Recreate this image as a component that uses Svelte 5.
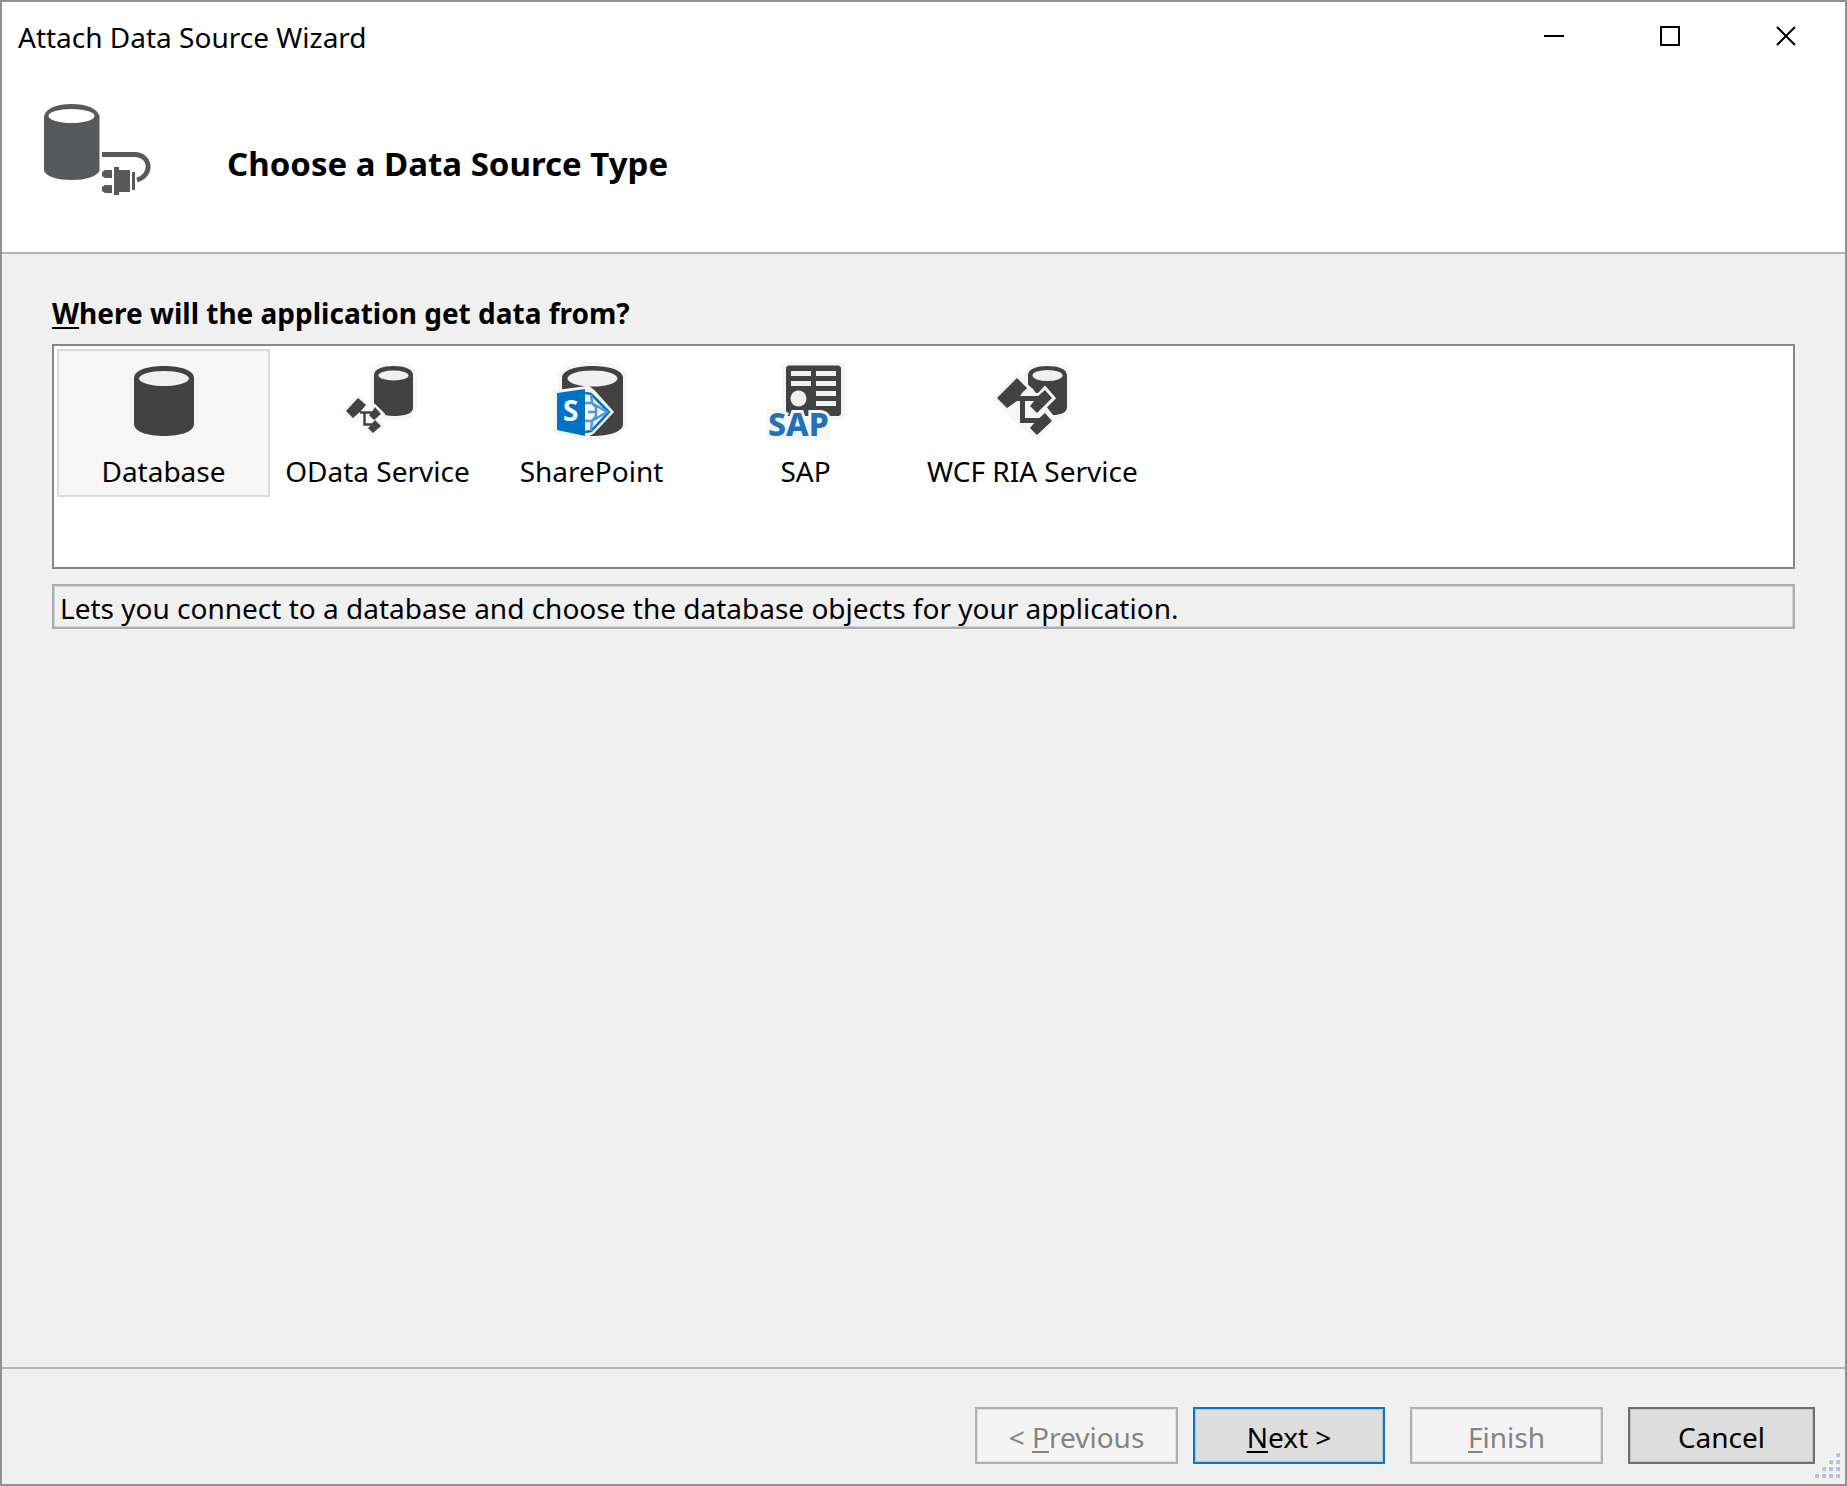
<script lang="ts">
	type SourceId = 'database' | 'odata' | 'sharepoint' | 'sap' | 'wcf';

	const sources: { id: SourceId; label: string; description: string }[] = [
		{
			id: 'database',
			label: 'Database',
			description: 'Lets you connect to a database and choose the database objects for your application.'
		},
		{ id: 'odata', label: 'OData Service', description: 'Lets you connect to an OData service.' },
		{ id: 'sharepoint', label: 'SharePoint', description: 'Lets you connect to a SharePoint site.' },
		{ id: 'sap', label: 'SAP', description: 'Lets you connect to SAP.' },
		{ id: 'wcf', label: 'WCF RIA Service', description: 'Lets you connect to a WCF RIA service.' }
	];

	let selected = $state<SourceId>('database');
	const description = $derived(sources.find((s) => s.id === selected)?.description ?? '');

	// resize grip dots, one more per row towards the corner
	const grip = [0, 1, 2, 3].flatMap((row) =>
		Array.from({ length: row + 1 }, (_, i) => ({ x: 23 - i * 7, y: 1 + row * 7 }))
	);
</script>

<div class="window">
	<div class="titlebar">
		<span class="title">Attach Data Source Wizard</span>
		<div class="controls">
			<button type="button" aria-label="Minimize">
				<svg width="20" height="20" viewBox="0 0 20 20"><path d="M0 10h20" stroke="#000" stroke-width="2" /></svg>
			</button>
			<button type="button" aria-label="Maximize">
				<svg width="20" height="20" viewBox="0 0 20 20"><path d="M1 1h18v18H1z" fill="none" stroke="#000" stroke-width="2" /></svg>
			</button>
			<button type="button" aria-label="Close">
				<svg width="20" height="20" viewBox="0 0 20 20"><path d="M1 1l18 18M19 1L1 19" stroke="#000" stroke-width="2" /></svg>
			</button>
		</div>
	</div>

	<header>
		<svg class="logo" width="108" height="92" viewBox="0 0 108 92" fill="#58595b">
			<path d="M0 12C2 4 13 0 27.500 0S53 4 55.500 12V67C52 73 41 76 27.500 76S3 73 0 67Z" />
			<ellipse cx="27.500" cy="12" rx="23" ry="7" fill="#fff" />
			<path d="M58 50.500H92C107 52 109 71 93 76" fill="none" stroke="#58595b" stroke-width="4.800" />
			<path d="M58 68l3-2h7v8h-7l-3-2zM58 83l3-2h7v8h-7l-3-2zM70 63h5v3h11v22H75v3h-5zM88 68h3v18h-3z" />
		</svg>
		<h1>Choose a Data Source Type</h1>
	</header>

	<main>
		<h2 id="source-label"><u>W</u>here will the application get data from?</h2>
		<div class="list" role="listbox" aria-labelledby="source-label">
			{#each sources as source (source.id)}
				<button
					type="button"
					class="source"
					class:selected={source.id === selected}
					role="option"
					aria-selected={source.id === selected}
					onclick={() => (selected = source.id)}
				>
					<svg width="80" height="80" viewBox="0 0 80 80" fill="#424242">
						{#if source.id === 'database'}
							<path d="M10 17C10 9 24 5 40 5S70 9 70 17V63C70 71 56 75 40 75S10 71 10 63Z" />
							<ellipse cx="40" cy="17.500" rx="25" ry="7.500" fill="#f0eff1" />
						{:else if source.id === 'odata'}
							<path class="halo" d="M36 14C36 8 45 5 55.500 5S75 8 75 14V47C75 53 66 55 55.500 55S36 50 36 47Z" />
							<path d="M36 14C36 8 45 5 55.500 5S75 8 75 14V47C75 53 66 55 55.500 55S36 50 36 47Z" />
							<ellipse cx="55.500" cy="14.500" rx="15" ry="5" fill="#f0eff1" />
							<g class="cut">
								<path d="M8 50L20 37L28 44L15 57ZM37 47L43 53L36 59L31 54ZM37 59L43 65L35 72L30 67Z" />
							</g>
							<path d="M8 50L20 37L28 44L22 51L15 57ZM37 46L43 53L36 59L31 54L34 51ZM37 59L43 65L35 72L30 67L33 64Z" />
							<path d="M22 51.500H36M26.500 51V63.500H36" fill="none" stroke="#424242" stroke-width="2.500" />
						{:else if source.id === 'sharepoint'}
							<path class="halo" d="M10 17C10 9 24 5 40.500 5S71 9 71 17V63C71 71 57 75 40 75L5 69V32L10 31Z" />
							<path d="M10 17C10 9 24 5 40.500 5S71 9 71 17V63C71 71 57 75 40 75H34L10 45Z" />
							<ellipse cx="40.500" cy="17.500" rx="25" ry="8" fill="#f0eff1" />
							<path class="cut" d="M5 32L36 28L41 32L58 51L40 70L33 74L5 69Z" />
							<path d="M33 32L39 33L57 51L39 70L33 71" fill="#f6f6f6" stroke="#0072c6" stroke-width="2.500" />
							<path d="M33 42H40L44 46V55L40 60H33M39 33L40 42L55 51L40 60L39 70M36 51H44" fill="none" stroke="#4d9ad6" stroke-width="2.500" />
							<path d="M5 32L33 28V75L5 69Z" fill="#0072c6" />
							<text x="11" y="60" font-size="28" font-weight="700" fill="#fff">S</text>
						{:else if source.id === 'sap'}
							<path class="halo" d="M22 5H73L75 7V53L73 55H60V75H5V52H20V7Z" />
							<path d="M22 4.500H73L75 6.500V53L73 55H20V6.500Z" />
							<path d="M25 10H45V15H25ZM50 10H70V15H50ZM25 20H45V25H25ZM50 20H70V25H50ZM50 30H70V35H50ZM50 40H70V45H50Z" fill="#f0eff1" />
							<circle cx="32.500" cy="37.500" r="8" fill="#f0eff1" />
							<text class="sap" x="2" y="75" font-size="32" font-weight="800">SAP</text>
						{:else}
							<path class="halo" d="M36 14C36 8 45 5 55.500 5S75 8 75 14V47C75 53 66 55 55.500 55L45 74L28 60L6 37L25 18L36 27Z" />
							<path d="M36 14C36 8 45 5 55.500 5S75 8 75 14V46C75 52 68 54 61 54L50 40L41 28L36 24Z" />
							<ellipse cx="55.500" cy="14.500" rx="15" ry="5.500" fill="#f0eff1" />
							<g class="cut">
								<path d="M5 37L25 17L35 27L15 47ZM53 29L60 37L45 52L38 45ZM53 52L60 60L45 74L38 67ZM28 35H46V60H28Z" />
							</g>
							<path d="M5 37L25 17L35 27L30 32L25 40L15 47ZM53 29L60 37L45 52L38 45L43 39L45 36ZM53 52L60 60L45 74L38 67L44 60Z" />
							<path d="M20 37.500H50M30.500 37V59.500H50" fill="none" stroke="#424242" stroke-width="5" />
						{/if}
					</svg>
					<span>{source.label}</span>
				</button>
			{/each}
		</div>
		<p class="description">{description}</p>
	</main>

	<footer>
		<button type="button" class="previous" disabled>&lt; <u>P</u>revious</button>
		<button type="button" class="next"><u>N</u>ext &gt;</button>
		<button type="button" class="finish" disabled><u>F</u>inish</button>
		<button type="button" class="cancel">Cancel</button>
		<svg class="grip" width="28" height="28" viewBox="0 0 28 28">
			{#each grip as dot}
				<rect x={dot.x - 1} y={dot.y - 1} width="5" height="5" fill="#fff" />
				<rect x={dot.x} y={dot.y} width="4" height="4" fill="#b8c4dc" />
			{/each}
		</svg>
	</footer>
</div>

<style>
	:global(body) {
		margin: 0;
	}

	.window {
		box-sizing: border-box;
		min-height: 100vh;
		display: flex;
		flex-direction: column;
		border: 2px solid #919191;
		background: #f0f0f0;
		color: #000;
		font-family: 'Segoe UI', 'Noto Sans', 'Open Sans', sans-serif;
		font-size: 28px;
		line-height: 40px;
	}

	button {
		box-sizing: border-box;
		margin: 0;
		padding: 0;
		border: 0;
		background: none;
		color: inherit;
		font: inherit;
	}

	u {
		text-decoration-thickness: 2px;
		text-underline-offset: 3px;
	}

	.titlebar {
		display: flex;
		justify-content: space-between;
		height: 68px;
		padding: 0 1px 0 16px;
		background: #fff;
	}
	.title {
		padding-top: 15px;
	}
	.controls {
		display: flex;
	}
	.controls button {
		display: grid;
		place-items: center;
		width: 116px;
	}

	header {
		display: flex;
		align-items: flex-start;
		gap: 75px;
		height: 184px;
		box-sizing: border-box;
		padding: 34px 42px 0;
		background: #fff;
		border-bottom: 2px solid #b3b3b3;
	}
	h1 {
		margin: 40px 0 0;
		font-size: 33px;
		line-height: 40px;
	}

	main {
		flex: 1;
		padding: 39px 50px 0;
	}
	h2 {
		margin: 0 0 11px;
		font-size: 28px;
		line-height: 40px;
	}
	.list {
		box-sizing: border-box;
		display: flex;
		align-items: flex-start;
		gap: 1px;
		min-height: 225px;
		padding: 3px;
		border: 2px solid #828790;
		background: #fff;
	}
	.source {
		display: flex;
		flex-direction: column;
		align-items: center;
		gap: 10px;
		min-width: 213px;
		height: 148px;
		padding: 10px 12px 0;
		border: 2px solid transparent;
		white-space: nowrap;
	}
	.source.selected {
		border-color: #dadada;
		background: #f6f6f6;
	}
	.source svg {
		flex: none;
		overflow: visible;
	}
	.halo {
		fill: #f6f6f6;
		stroke: #f6f6f6;
		stroke-width: 8px;
	}
	.cut {
		fill: #f6f6f6;
		stroke: #f6f6f6;
		stroke-width: 6px;
	}
	.sap {
		fill: #2272b9;
		stroke: #f6f6f6;
		stroke-width: 6px;
		paint-order: stroke;
	}
	.description {
		margin: 15px 0 0;
		padding: 3px 6px 0;
		border: 2px solid #abadb3;
		box-shadow: inset 0 0 0 1px #d0d1d4;
		line-height: 38px;
	}

	footer {
		position: relative;
		display: flex;
		justify-content: flex-end;
		padding: 38px 30px 20px;
		border-top: 2px solid #b3b3b3;
	}
	footer button {
		height: 57px;
		padding-top: 2px;
		border: 2px solid #707070;
		background: #ddd;
		box-shadow: inset 0 0 0 1px #c4c4c4;
	}
	footer button:disabled {
		border-color: #adb2b5;
		background: #f4f4f4;
		box-shadow: inset 0 0 0 1px #dfe1e1;
		color: #838383;
	}
	.previous {
		width: 203px;
		margin-right: 15px;
	}
	.next {
		width: 192px;
		margin-right: 25px;
		border-color: #0078d7;
	}
	.finish {
		width: 193px;
		margin-right: 25px;
	}
	.cancel {
		width: 187px;
	}
	.grip {
		position: absolute;
		right: 4px;
		bottom: 4px;
	}
</style>
